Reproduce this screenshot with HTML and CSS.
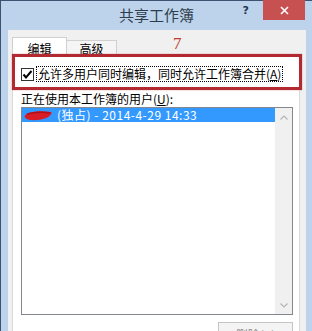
FILE: index.html
```html
<!DOCTYPE html>
<html lang="zh-CN">
<head>
<meta charset="utf-8">
<title>共享工作簿</title>
<link rel="stylesheet" href="styles.css">
</head>
<body>
<div class="window">
  <div class="titlebar">
    <div class="title">共享工作簿</div>
    <div class="controls">
      <span class="help">?</span>
      <span class="close"><svg width="9" height="9" viewBox="0 0 9 9"><path d="M1 1 L8 8 M8 1 L1 8" stroke="#fff" stroke-width="1.6" fill="none"/></svg></span>
    </div>
  </div>
  <div class="client">
    <span class="annot">7</span>
    <div class="tabs">
      <div class="tab active">编辑</div>
      <div class="tab">高级</div>
    </div>
    <div class="panel">
      <div class="highlight"></div>
      <div class="option">
        <span class="checkbox"><svg width="11" height="11" viewBox="0 0 11 11"><path d="M1.5 5.5 L4 8.5 L9.5 2" stroke="#000" stroke-width="2" fill="none"/></svg></span>
        <span class="option-label">允许多用户同时编辑，同时允许工作簿合并(<u>A</u>)</span>
      </div>
      <div class="label">正在使用本工作簿的用户(<u>U</u>):</div>
      <div class="listbox">
        <div class="items">
          <div class="row"><svg class="blot" width="28" height="11" viewBox="0 0 28 11"><path d="M0.5 6 C3 1.5 16 0 27.5 2 C28 5.5 23 9 14 10 C7 10.5 1 10 0.5 6 Z" fill="#d91d27"/><path d="M3 4 C10 2 20 2 26 3" stroke="#b01018" stroke-width="1.5" fill="none"/></svg><span class="entry">(独占) - 2014-4-29 14:33</span></div>
        </div>
        <div class="scrollbar">
          <svg width="8" height="5" viewBox="0 0 8 5"><path d="M0.5 4.5 L4 1 L7.5 4.5" stroke="#b5b5b5" stroke-width="1.2" fill="none"/></svg>
          <svg width="8" height="5" viewBox="0 0 8 5"><path d="M0.5 0.5 L4 4 L7.5 0.5" stroke="#b5b5b5" stroke-width="1.2" fill="none"/></svg>
        </div>
      </div>
      <div class="buttons">
        <div class="btn">删除(<u>R</u>)</div>
      </div>
    </div>
  </div>
</div>
</body>
</html>
```
FILE: styles.css
```css
html, body {
  margin: 0;
  padding: 0;
}
body {
  width: 312px;
  height: 331px;
  overflow: hidden;
  background: #ffffff;
  font-family: "Noto Sans CJK SC", "Noto Sans", sans-serif;
}
.window {
  width: 312px;
  height: 380px;
  box-sizing: border-box;
  background: #bcd3eb;
  border-top: 1px solid #3b5270;
  border-left: 1px solid #3b5270;
  display: flex;
  flex-direction: column;
}
.titlebar {
  height: 29px;
  display: grid;
  grid-template-columns: 1fr auto 1fr;
  align-items: start;
}
.title {
  grid-column: 2;
  font-size: 15px;
  line-height: 28px;
  color: #2f3d4d;
}
.controls {
  grid-column: 3;
  justify-self: end;
  display: flex;
  align-items: flex-start;
}
.help {
  font-family: "DejaVu Sans", sans-serif;
  font-weight: bold;
  font-size: 11px;
  line-height: 12px;
  color: #1f3550;
  margin-top: 4px;
  margin-right: 14px;
}
.close {
  width: 42px;
  height: 20px;
  margin-top: -1px;
  margin-right: 7px;
  background: #c75050;
  display: flex;
  align-items: center;
  justify-content: center;
}
.client {
  flex: 1;
  position: relative;
  background: #f0f0f0;
  margin-left: 7px;
  margin-right: 6px;
  padding: 7px 6px 0 4px;
}
.annot {
  position: absolute;
  left: 165px;
  top: 4px;
  font-family: "Liberation Serif", serif;
  font-size: 17px;
  line-height: 20px;
  color: #c0392b;
}
.tabs {
  display: flex;
  align-items: flex-end;
  height: 18px;
}
.tab {
  box-sizing: border-box;
  width: 50px;
  height: 15px;
  padding-top: 1px;
  border: 1px solid #d0d0d0;
  border-bottom: none;
  border-left: none;
  background: #f5f5f5;
  font-size: 12px;
  line-height: 14px;
  text-align: center;
  color: #000;
}
.tab.active {
  width: 55px;
  height: 18px;
  padding-top: 4px;
  border-left: 1px solid #d0d0d0;
  background: #ffffff;
}
.panel {
  position: relative;
  background: #ffffff;
  border: 1px solid #d9d9d9;
  padding: 10px 6px 0 8px;
  height: 300px;
}
.highlight {
  position: absolute;
  left: -1px;
  top: -2px;
  width: 290px;
  height: 36px;
  box-sizing: border-box;
  border: 3px solid #b22a2f;
  box-shadow: 0 0 1px #d06060;
}
.option {
  display: flex;
  align-items: center;
  height: 16px;
}
.checkbox {
  width: 13px;
  height: 13px;
  box-sizing: border-box;
  border: 1px solid #333;
  background: #fff;
  display: flex;
  align-items: center;
  justify-content: center;
}
.option-label {
  margin-left: 2px;
  border: 1px dotted #000;
  padding: 0 1px;
  font-size: 12px;
  line-height: 14px;
  color: #000;
}
.label {
  margin-top: 9px;
  height: 16px;
  font-size: 12px;
  line-height: 16px;
  color: #000;
}
.listbox {
  height: 208px;
  box-sizing: border-box;
  border: 1px solid #828790;
  display: flex;
}
.items {
  flex: 1;
}
.row {
  height: 14px;
  background: #3399ff;
  color: #fff;
  font-size: 12px;
  line-height: 14px;
  display: flex;
  align-items: center;
  padding-left: 2px;
}
.entry {
  letter-spacing: 0.5px;
}
.blot {
  margin-right: 5px;
  flex: none;
}
.scrollbar {
  width: 17px;
  background: #f0f0f0;
  display: flex;
  flex-direction: column;
  justify-content: space-between;
  align-items: center;
  padding: 7px 0 6px;
  box-sizing: border-box;
}
.buttons {
  display: flex;
  justify-content: flex-end;
  margin-top: 7px;
}
.btn {
  box-sizing: border-box;
  width: 75px;
  height: 23px;
  border: 1px solid #c4c4c4;
  background: #f4f4f4;
  color: #8a8a8a;
  font-size: 12px;
  line-height: 14px;
  padding-top: 5px;
  text-align: center;
}
```
